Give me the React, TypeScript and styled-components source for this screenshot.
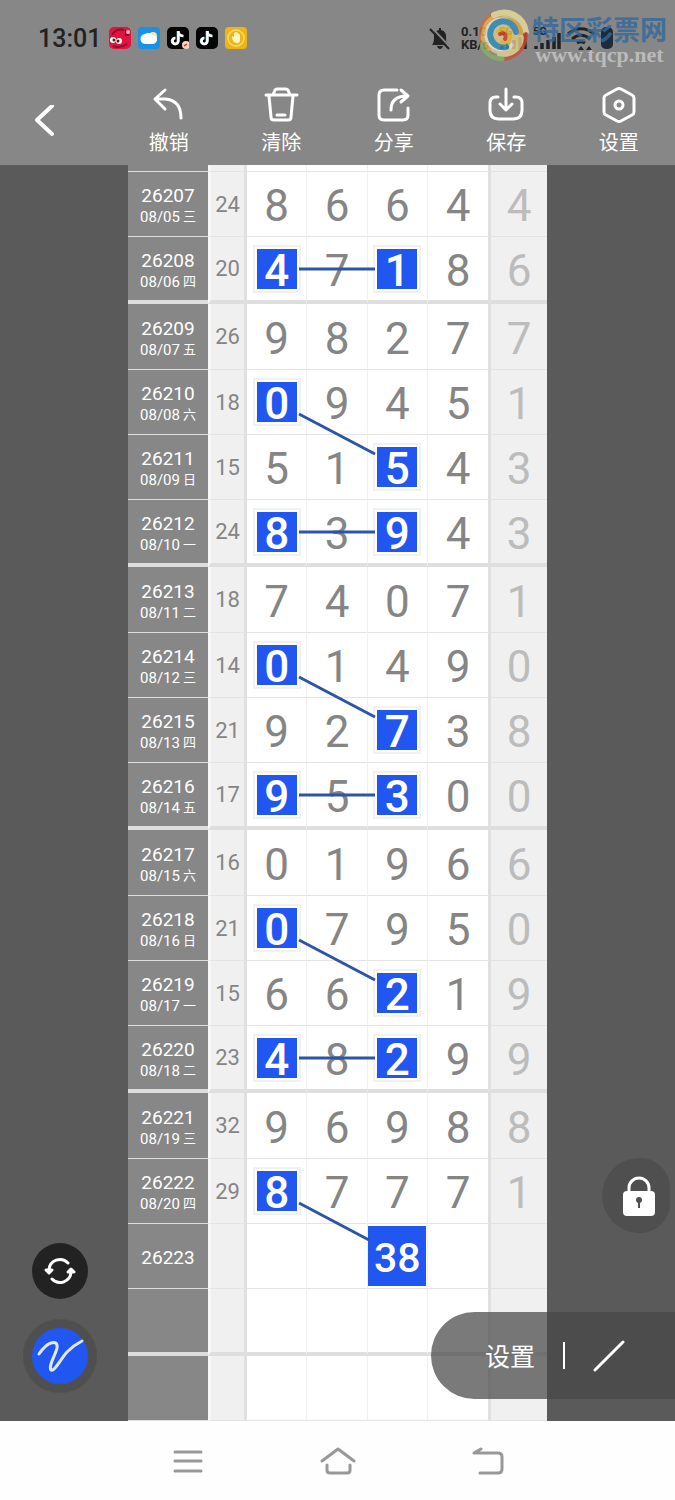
import React from "react";
import { FC } from "react";
import styled, { createGlobalStyle } from "styled-components";

type Link = "flat" | "down" | "last";

interface Draw {
  issue?: string;
  date?: string;
  sum?: number;
  digits: string;
  marks?: number[];
  link?: Link;
}

interface CellProps {
  $height: number;
  $thick?: boolean;
}

const BLUE = "#2156f0";

const GlobalStyle = createGlobalStyle`
  * {
    box-sizing: border-box;
  }
  body {
    margin: 0;
    background: #fff;
    font-family: Roboto, "Noto Sans CJK SC", sans-serif;
  }
  button {
    border: 0;
    padding: 0;
    background: none;
    color: inherit;
    font-family: inherit;
    cursor: pointer;
  }
  svg {
    display: block;
  }
`;

const Page = styled.div`
  display: flex;
  flex-direction: column;
  min-height: 100vh;
`;

const Header = styled.header`
  position: relative;
  background: #878787;
  color: #fff;
`;

const StatusBar = styled.div`
  display: flex;
  align-items: center;
  height: 76px;
  padding: 0 62px 0 38px;
  color: #222;
`;

const Clock = styled.span`
  font-size: 25px;
  font-weight: 500;
  margin-right: 8px;
`;

const AppIcons = styled.div`
  display: flex;
  gap: 7px;
`;

const Signals = styled.div`
  display: flex;
  align-items: center;
  gap: 6px;
  margin-left: auto;
`;

const Speed = styled.span`
  width: 32px;
  margin-left: 4px;
  font-size: 13px;
  line-height: 13px;
  font-weight: 700;
`;

const Watermark = styled.div`
  position: absolute;
  top: 8px;
  right: 8px;
  display: flex;
  gap: 2px;
  opacity: 0.8;
`;

const WatermarkText = styled.div`
  display: flex;
  flex-direction: column;
  align-items: center;
  padding-top: 7px;
`;

const SiteName = styled.span`
  color: #32689b;
  font-size: 27px;
  line-height: 32px;
  font-weight: 700;
`;

const SiteUrl = styled.span`
  color: #c8c8c8;
  font-family: "Liberation Serif", serif;
  font-size: 22px;
  line-height: 16px;
  font-weight: 700;
`;

const Toolbar = styled.nav`
  display: grid;
  grid-template-columns: repeat(6, 1fr);
  height: 89px;
`;

const BackButton = styled.button`
  padding-left: 32px;
`;

const Tool = styled.button`
  display: flex;
  flex-direction: column;
  align-items: center;
  padding-top: 9px;
  gap: 4px;
  font-size: 20px;
  line-height: 28px;
`;

const Board = styled.main`
  position: relative;
  flex: 1;
  padding: 0 128px;
  background: #5a5a5a;
  overflow: hidden;
`;

const Table = styled.table`
  width: 100%;
  table-layout: fixed;
  border-collapse: separate;
  border-spacing: 0;
  background: #fff;
  color: #858585;
`;

const Cell = styled.td<CellProps>`
  position: relative;
  height: ${(props) => props.$height}px;
  padding: 0;
  text-align: center;
  border-bottom: ${(props) => (props.$thick ? "4px solid #dedede" : "1px solid #e4e4e4")};
`;

const IssueCell = styled(Cell)`
  background: #878787;
  color: #fff;
  border-bottom-color: #dedede;
`;

const Issue = styled.div`
  padding-top: 4px;
  font-size: 19px;
  line-height: 22px;
`;

const Day = styled.div`
  display: flex;
  justify-content: center;
  gap: 3px;
  font-size: 15px;
  line-height: 20px;
`;

const Weekday = styled.span`
  font-size: 13px;
`;

const SumCell = styled(Cell)`
  background: #f0f0f0;
  border-left: 3px solid #f7f7f7;
  border-right: 3px solid #e0e0e0;
  font-size: 22px;
`;

const DigitCell = styled(Cell)<{ $last: boolean }>`
  border-right: ${(props) => (props.$last ? "3px solid #e0e0e0" : "1px solid #f0f0f0")};
`;

const TailCell = styled(Cell)`
  background: #f0f0f0;
  color: #bcbcbc;
`;

const Digit = styled.div`
  padding-top: 4px;
  font-size: 44px;
  line-height: 50px;
`;

const Marker = styled.div`
  width: 40px;
  height: 40px;
  margin: 0 auto;
  background: ${BLUE};
  box-shadow: 0 0 0 2px #fff, 0 0 0 4px #f0f2f0;
  color: #fff;
  font-size: 44px;
  font-weight: 500;
  line-height: 44px;
`;

const Guess = styled.div`
  width: 58px;
  height: 60px;
  margin: 0 auto;
  background: ${BLUE};
  color: #fff;
  font-size: 41px;
  font-weight: 500;
  line-height: 64px;
`;

const Connector = styled.svg`
  position: absolute;
  z-index: 1;
  left: 50%;
  top: 50%;
  overflow: visible;
  pointer-events: none;
`;

const Floating = styled.div`
  position: absolute;
  left: 23px;
  bottom: 28px;
  display: flex;
  flex-direction: column;
  align-items: center;
  gap: 20px;
`;

const RefreshButton = styled.button`
  display: grid;
  place-items: center;
  width: 56px;
  height: 56px;
  border-radius: 50%;
  background: #222;
`;

const PenButton = styled.button`
  display: grid;
  place-items: center;
  width: 74px;
  height: 74px;
  border: 9px solid #4f4f4f;
  border-radius: 50%;
  background: ${BLUE};
`;

const LockButton = styled.button`
  position: absolute;
  right: 5px;
  bottom: 188px;
  width: 68px;
  height: 75px;
  border-radius: 38px 30px 30px 38px;
  background: #4f4f4f;
  padding-left: 20px;
`;

const LinePanel = styled.div`
  position: absolute;
  right: 0;
  bottom: 22px;
  display: flex;
  align-items: center;
  width: 244px;
  height: 87px;
  padding-left: 54px;
  border-radius: 44px 0 0 44px;
  background: rgba(70, 70, 70, 0.72);
  color: #fff;
`;

const PanelButton = styled.button`
  padding-top: 4px;
  font-size: 25px;
  line-height: 36px;
`;

const SlashButton = styled.button`
  display: grid;
  place-items: center;
`;

const Divider = styled.span`
  width: 2px;
  height: 27px;
  margin: 0 28px;
  background: #fff;
`;

const NavBar = styled.nav`
  display: flex;
  justify-content: center;
  align-items: center;
  gap: 110px;
  height: 79px;
  background: #fefefe;
`;

const draws: Draw[] = [
  { issue: "26207", date: "08/05 三", sum: 24, digits: "86644" },
  { issue: "26208", date: "08/06 四", sum: 20, digits: "47186", marks: [0, 2], link: "flat" },
  { issue: "26209", date: "08/07 五", sum: 26, digits: "98277" },
  { issue: "26210", date: "08/08 六", sum: 18, digits: "09451", marks: [0], link: "down" },
  { issue: "26211", date: "08/09 日", sum: 15, digits: "51543", marks: [2] },
  { issue: "26212", date: "08/10 一", sum: 24, digits: "83943", marks: [0, 2], link: "flat" },
  { issue: "26213", date: "08/11 二", sum: 18, digits: "74071" },
  { issue: "26214", date: "08/12 三", sum: 14, digits: "01490", marks: [0], link: "down" },
  { issue: "26215", date: "08/13 四", sum: 21, digits: "92738", marks: [2] },
  { issue: "26216", date: "08/14 五", sum: 17, digits: "95300", marks: [0, 2], link: "flat" },
  { issue: "26217", date: "08/15 六", sum: 16, digits: "01966" },
  { issue: "26218", date: "08/16 日", sum: 21, digits: "07950", marks: [0], link: "down" },
  { issue: "26219", date: "08/17 一", sum: 15, digits: "66219", marks: [2] },
  { issue: "26220", date: "08/18 二", sum: 23, digits: "48299", marks: [0, 2], link: "flat" },
  { issue: "26221", date: "08/19 三", sum: 32, digits: "96988" },
  { issue: "26222", date: "08/20 四", sum: 29, digits: "87771", marks: [0], link: "last" },
  { issue: "26223", digits: "" },
  { digits: "" },
  { digits: "" },
];

const linkPaths: Record<Link, string> = {
  flat: "M22 0H98",
  down: "M22 12L98 52",
  last: "M22 12L92 49",
};

// every fourth row closes a group with a thick rule
const rowHeight = (index: number) => {
  if (index % 4 === 1) return 67;
  return index > 1 && index < 18 && index % 4 === 2 ? 66 : 65;
};

const DrawRow: FC<{ draw: Draw; index: number }> = ({ draw, index }) => {
  const size = { $height: rowHeight(index), $thick: index % 4 === 1 };
  const [day, week] = (draw.date || "").split(" ");
  return (
    <tr>
      <IssueCell {...size}>
        {draw.issue && <Issue>{draw.issue}</Issue>}
        {draw.date && (
          <Day>
            {day}
            <Weekday>{week}</Weekday>
          </Day>
        )}
      </IssueCell>
      <SumCell {...size}>{draw.sum}</SumCell>
      {[0, 1, 2, 3].map((col) => (
        <DigitCell key={col} {...size} $last={col === 3}>
          {draw.marks?.includes(col) ? (
            <Marker>{draw.digits[col]}</Marker>
          ) : (
            draw.digits && <Digit>{draw.digits[col]}</Digit>
          )}
          {draw.issue === "26223" && col === 2 && <Guess>38</Guess>}
          {draw.link && col === 0 && (
            <Connector width="1" height="1">
              <path d={linkPaths[draw.link]} stroke="#2c55a8" strokeWidth="3" fill="none" />
            </Connector>
          )}
        </DigitCell>
      ))}
      <TailCell {...size}>{draw.digits && <Digit>{draw.digits[4]}</Digit>}</TailCell>
    </tr>
  );
};

const Icon: FC<{ children: React.ReactNode; size?: number; width?: number; color?: string }> = ({
  children,
  size = 40,
  width = 3,
  color = "#fff",
}) => (
  <svg
    width={size}
    height={size}
    viewBox={`0 0 ${size} ${size}`}
    fill="none"
    stroke={color}
    strokeWidth={width}
    strokeLinecap="round"
    strokeLinejoin="round"
    aria-hidden="true"
  >
    {children}
  </svg>
);

const NoteShape = () => (
  <>
    <rect width="22" height="22" rx="5" fill="#050505" />
    <path d="M11 4v10a3 3 0 1 1-3-3M11 4c0 3 2 5 5 5" fill="none" stroke="#9ee" strokeWidth="2.6" />
    <path d="M11.500 4v10a3 3 0 1 1-3-3M11.500 4c0 3 2 5 5 5" fill="none" stroke="#fff" strokeWidth="2.4" />
  </>
);

const Signal = () => (
  <svg width="28" height="24" viewBox="0 0 28 24" aria-hidden="true">
    <text x="0" y="9" fontSize="11" fontWeight="700" fill="#222">5G</text>
    <path d="M3 23v-3M9 23v-6M15 23v-9M21 23V11M26 23V7" stroke="#222" strokeWidth="3.500" />
  </svg>
);

const App: FC = () => (
  <Page>
    <GlobalStyle />
    <Header>
      <StatusBar>
        <Clock>13:01</Clock>
        <AppIcons>
          <svg width="22" height="22" aria-hidden="true">
            <rect width="22" height="22" rx="5" fill="#e3123f" />
            <path d="M3 8c3-5 8-6 12-5M17 3v5h3M4 19c5 2 10 1 14-2" stroke="#8d1030" strokeWidth="2" fill="none" />
            <circle cx="19" cy="5" r="2" fill="#f5b5bd" />
            <circle cx="4" cy="13" r="3" fill="#fff" />
            <circle cx="10" cy="14" r="3" fill="#fff" />
            <circle cx="5" cy="13" r="1.500" fill="#421" />
            <circle cx="9" cy="14" r="1.500" fill="#421" />
          </svg>
          <svg width="22" height="22" aria-hidden="true">
            <rect width="22" height="22" rx="4" fill="#1693e8" />
            <circle cx="15" cy="9" r="4" fill="#f8e9a0" />
            <path d="M8 17a5 5 0 0 1-1-10A5 5 0 0 1 14 8a4.500 4.500 0 0 1 1 9z" fill="#fff" />
          </svg>
          <svg width="22" height="22" aria-hidden="true">
            <NoteShape />
            <circle cx="19" cy="18" r="4" fill="#f4d9c4" />
            <path d="M17 19l3-2" stroke="#d23" strokeWidth="1.500" />
          </svg>
          <svg width="22" height="22" aria-hidden="true">
            <NoteShape />
          </svg>
          <svg width="22" height="22" aria-hidden="true">
            <rect width="22" height="22" rx="4" fill="#edb416" />
            <circle cx="11" cy="11" r="8" fill="none" stroke="#f9dc6e" strokeWidth="1.500" />
            <path d="M7 9l2 1V6l2-1 2 1 2 2v5c0 5-7 4-8-2z" fill="#fff4c4" />
          </svg>
        </AppIcons>
        <Signals>
          <svg width="22" height="24" viewBox="0 0 22 24" aria-hidden="true">
            <path d="M3 19c2-2 2-6 2-9 0-4 3-6 6-6s6 2 6 6c0 3 0 7 2 9zM8 20h6c-1 4-5 4-6 0zM10 2h2v3h-2z" fill="#222" />
            <path d="M3 2l19 20" stroke="#878787" strokeWidth="2" />
            <path d="M1 3l19 20" stroke="#222" strokeWidth="2" />
          </svg>
          <Speed>0.10 KB/s</Speed>
          <Signal />
          <Signal />
          <svg width="28" height="24" viewBox="0 0 28 24" fill="none" stroke="#222" strokeWidth="3" aria-hidden="true">
            <path d="M1 8c8-7 18-7 26 0M5 13c6-5 12-5 18 0M10 17c3-2 5-2 8 0" />
            <path d="M11 24l3-4 3 4zM19 24l3-4 3 4z" fill="#222" strokeWidth="0" />
          </svg>
          <svg width="12" height="24" viewBox="0 0 12 24" aria-hidden="true">
            <rect y="1" width="12" height="22" rx="5" fill="#1c2c3c" />
          </svg>
        </Signals>
      </StatusBar>
      <Watermark>
        <svg width="54" height="54" viewBox="0 0 54 54" fill="none" strokeLinecap="round" aria-hidden="true">
          <circle cx="27" cy="27" r="20" fill="#e6c98a" />
          <path d="M8 38A23 23 0 0 1 20 5" stroke="#d9633e" strokeWidth="4" />
          <path d="M12 40A20 20 0 0 1 24 8" stroke="#e9b24a" strokeWidth="6" />
          <path d="M18 7C32 0 48 9 50 24" stroke="#ecdf9a" strokeWidth="6" />
          <path d="M24 13C36 9 46 18 45 30" stroke="#e5a63c" strokeWidth="5" />
          <path d="M50 26C50 40 40 50 26 51" stroke="#cf4a36" strokeWidth="4" />
          <path d="M45 30C44 40 36 47 24 46" stroke="#e4d28c" strokeWidth="6" />
          <path d="M26 51C14 50 8 44 6 36" stroke="#86b062" strokeWidth="5" />
          <path d="M36 37A15 15 0 1 1 37 17" stroke="#f0ead6" strokeWidth="4" />
          <path d="M40 24A13 13 0 1 0 30 39" stroke="#2f8fba" strokeWidth="6" />
          <path d="M22 24C26 19 35 22 34 30C33 34 29 35 26 34" stroke="#ecc22e" strokeWidth="4" />
          <path d="M24 26C28 24 31 27 29 31" stroke="#d8402c" strokeWidth="4" />
        </svg>
        <WatermarkText>
          <SiteName>特区彩票网</SiteName>
          <SiteUrl>www.tqcp.net</SiteUrl>
        </WatermarkText>
      </Watermark>
      <Toolbar>
        <BackButton aria-label="返回">
          <Icon size={32} width={4}>
            <path d="M20 1L5 15L20 29" />
          </Icon>
        </BackButton>
        <Tool>
          <Icon>
            <path d="M16 5L6 14L16 24M7 14H16Q32 15 32 33" />
          </Icon>
          撤销
        </Tool>
        <Tool>
          <Icon>
            <path d="M5 10H36M12 10L14 5Q15 4 17 4H24Q26 4 27 5L29 10M8 11L10 32Q10 35 13 35H27Q30 35 30 32L32 11M16 30H24" />
          </Icon>
          清除
        </Tool>
        <Tool>
          <Icon>
            <path d="M23 5H10Q5 5 5 10V30Q5 35 10 35H29Q34 35 34 30V23M17 25Q17 11 33 11M27 5L34 11L27 17" />
          </Icon>
          分享
        </Tool>
        <Tool>
          <Icon>
            <path d="M12 12H10Q4 12 4 18V25Q4 34 13 34H27Q36 34 36 25V18Q36 12 30 12H28M20 4V24M14 19L20 25L26 19" />
          </Icon>
          保存
        </Tool>
        <Tool>
          <Icon>
            <path d="M18 4Q20 3 22 4L33 10Q35 11 35 13V27Q35 29 33 30L22 36Q20 37 18 36L7 30Q5 29 5 27V13Q5 11 7 10Z" />
            <circle cx="20" cy="20" r="4" />
          </Icon>
          设置
        </Tool>
      </Toolbar>
    </Header>
    <Board>
      <Table aria-label="走势图">
        <colgroup>
          <col style={{ width: 80 }} />
          <col style={{ width: 39 }} />
          <col />
          <col />
          <col />
          <col style={{ width: 63 }} />
          <col style={{ width: 56 }} />
        </colgroup>
        <tbody>
          <tr>
            <IssueCell $height={7} />
            <SumCell $height={7} />
            {[0, 1, 2, 3].map((col) => (
              <DigitCell key={col} $height={7} $last={col === 3} />
            ))}
            <TailCell $height={7} />
          </tr>
          {draws.map((draw, index) => (
            <DrawRow key={index} draw={draw} index={index} />
          ))}
        </tbody>
      </Table>
      <Floating>
        <RefreshButton aria-label="刷新">
          <Icon size={32}>
            <path d="M5 15A11 11 0 0 1 24 8M27 17A11 11 0 0 1 8 24" />
            <path d="M2 15L5 18L8 15ZM24 17L27 14L30 17Z" />
          </Icon>
        </RefreshButton>
        <PenButton aria-label="画笔">
          <Icon size={52}>
            <path d="M5 24Q11 15 17 13Q24 11 23 18C22 24 14 36 17 40C20 42 26 30 33 22Q40 15 48 11" stroke="#dfe8ff" />
          </Icon>
        </PenButton>
      </Floating>
      <LockButton aria-label="锁定">
        <svg width="34" height="42" viewBox="0 0 34 42" aria-hidden="true">
          <path d="M7 18V13a10 10 0 0 1 20 0v5" fill="none" stroke="#fff" strokeWidth="3" />
          <rect x="1" y="16" width="32" height="25" rx="4" fill="#fff" />
          <circle cx="17" cy="25" r="3" fill="#4f4f4f" />
          <path d="M17 25v8" stroke="#4f4f4f" strokeWidth="2" />
        </svg>
      </LockButton>
      <LinePanel>
        <PanelButton>设置</PanelButton>
        <Divider />
        <SlashButton aria-label="直线">
          <Icon size={32}>
            <path d="M2 30L30 2" />
          </Icon>
        </SlashButton>
      </LinePanel>
    </Board>
    <NavBar>
      <button aria-label="菜单">
        <Icon color="#989898">
          <path d="M7 11H33M7 20H33M7 30H33" />
        </Icon>
      </button>
      <button aria-label="主页">
        <Icon color="#989898">
          <path d="M4 20L20 8L36 20M9 24V29Q9 32 12 32H29Q32 32 32 29V24" />
        </Icon>
      </button>
      <button aria-label="后退">
        <Icon color="#989898">
          <path d="M13 8L6 12H30Q34 12 34 16V28Q34 32 30 32H12" />
        </Icon>
      </button>
    </NavBar>
  </Page>
);

export default App;
